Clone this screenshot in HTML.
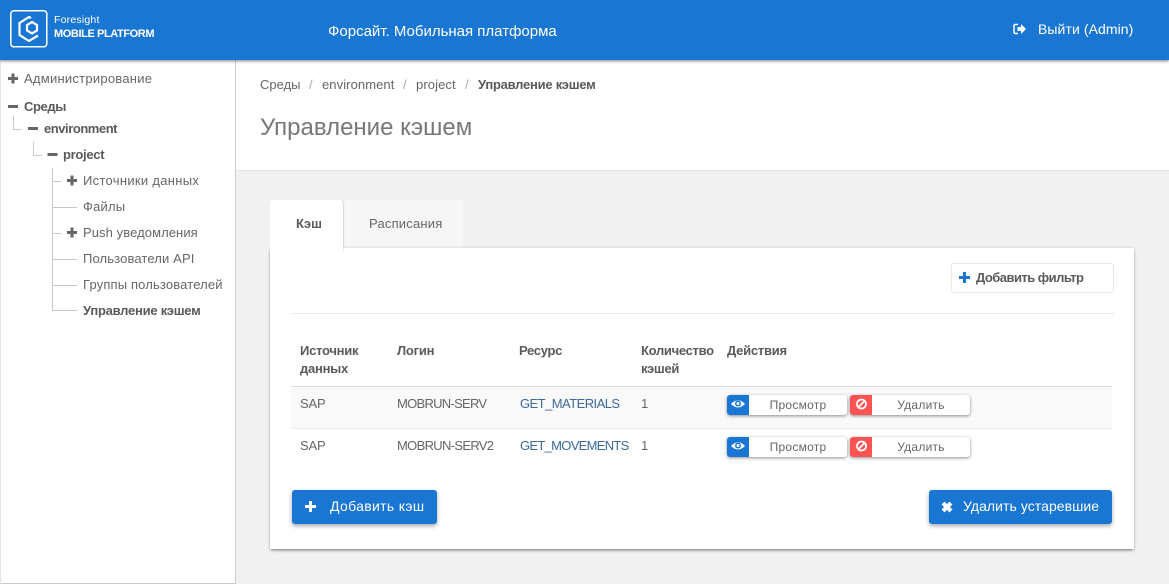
<!DOCTYPE html>
<html><head><meta charset="utf-8">
<style>
html,body{margin:0;padding:0;width:1169px;height:584px;overflow:hidden;background:#f1f1f1;font-family:"Liberation Sans",sans-serif;font-size:13px;color:#666}
.a{position:absolute;white-space:nowrap;line-height:16px}
.b{font-weight:bold;color:#5a5a5a}
.l{position:absolute;background:#c8c8c8}
.act{position:absolute;height:20px;width:120px;background:#fff;border-radius:3px;box-shadow:0 1px 3px rgba(0,0,0,.45);font-size:12px;line-height:21px;color:#666;text-align:center;letter-spacing:.25px}
.act i{position:absolute;left:0;top:0;width:22px;height:20px;border-radius:3px 0 0 3px;display:block}
.act svg{position:absolute;left:0;top:0}
.act span{position:absolute;left:22px;right:0;top:0;text-align:center}
.btn{position:absolute;height:34px;background:#1976d2;border-radius:3px;box-shadow:0 2px 4px rgba(0,0,0,.35);color:#fff;font-size:14px;line-height:33px}
</style></head>
<body>
<div style="position:absolute;left:0;top:0;width:1169px;height:60px;background:#1976d2;box-shadow:0 1px 3px rgba(0,0,0,.5);z-index:5">
<svg style="position:absolute;left:0;top:0" width="170" height="60" fill="none" stroke="#fff">
<rect x="10.800" y="10.800" width="36" height="36" rx="3" stroke-width="1.500"/>
<path d="M31 18L29 17L19.500 23V35L29 41L38 35.500" stroke-width="2.200"/>
<path d="M32 22L37 25V30.500L32 33.500L27 30.500V25Z" stroke-width="2.200"/>
</svg>
<div class="a" style="left:54px;top:12px;font-size:10.500px;color:#fff;letter-spacing:.2px">Foresight</div>
<div class="a" style="left:54px;top:26px;font-size:11px;font-weight:bold;color:#fff;letter-spacing:-.4px">MOBILE PLATFORM</div>
<div class="a" style="left:328px;top:22px;line-height:20px;font-size:15px;color:#fff">Форсайт. Мобильная платформа</div>
<svg style="position:absolute;left:1013px;top:23px" width="14" height="13"><path d="M5 1.500H2.500Q1 1.500 1 3V9Q1 10.500 2.500 10.500H5" fill="none" stroke="#fff" stroke-width="1.500"/><path d="M4.500 4H8V1L13 6L8 11V8H4.500Z" fill="#fff"/></svg>
<div class="a" style="left:1038px;top:21px;font-size:14px;color:#fff;letter-spacing:.08px">Выйти (Admin)</div>
</div>

<!-- sidebar -->
<div style="position:absolute;left:0;top:60px;width:235px;height:524px;background:#fff;border-right:1px solid #ccc"></div>
<div style="position:absolute;left:0;top:583px;width:235px;height:1px;background:#ccc"></div>
<div style="position:absolute;left:0;top:60px;width:1px;height:524px;background:#e4e4e4"></div>
<svg style="position:absolute;left:0;top:60px" width="235" height="270" fill="#666">
<path d="M8 17h3.500v-3.500h3v3.500h3.500v3h-3.500v3.500h-3v-3.500h-3.500z"/>
<rect x="8" y="45" width="10" height="3"/>
<rect x="28" y="67" width="10" height="3"/>
<rect x="47.500" y="93" width="10" height="3"/>
<path d="M67 119h3.500v-3.500h3v3.500h3.500v3h-3.500v3.500h-3v-3.500h-3.500z"/>
<path d="M67 171h3.500v-3.500h3v3.500h3.500v3h-3.500v3.500h-3v-3.500h-3.500z"/>
</svg>
<div class="l" style="left:13px;top:116px;width:1px;height:13px"></div><div class="l" style="left:13px;top:129px;width:9px;height:1px"></div>
<div class="l" style="left:33px;top:142px;width:1px;height:13px"></div><div class="l" style="left:33px;top:155px;width:9px;height:1px"></div>
<div class="l" style="left:52px;top:168px;width:1px;height:143px"></div>
<div class="l" style="left:52px;top:181px;width:9px;height:1px"></div>
<div class="l" style="left:52px;top:207px;width:25px;height:1px"></div>
<div class="l" style="left:52px;top:233px;width:9px;height:1px"></div>
<div class="l" style="left:52px;top:259px;width:25px;height:1px"></div>
<div class="l" style="left:52px;top:285px;width:25px;height:1px"></div>
<div class="l" style="left:52px;top:310px;width:25px;height:1px"></div>
<div class="a" style="left:24px;top:71px;letter-spacing:.25px">Администрирование</div>
<div class="a b" style="left:24px;top:99px;letter-spacing:-.4px">Среды</div>
<div class="a b" style="left:44px;top:121px;letter-spacing:-.45px">environment</div>
<div class="a b" style="left:63px;top:147px;letter-spacing:-.3px">project</div>
<div class="a" style="left:83px;top:173px;letter-spacing:.3px">Источники данных</div>
<div class="a" style="left:83px;top:199px;letter-spacing:.2px">Файлы</div>
<div class="a" style="left:83px;top:225px;letter-spacing:.08px">Push уведомления</div>
<div class="a" style="left:83px;top:251px;letter-spacing:.13px">Пользователи API</div>
<div class="a" style="left:83px;top:277px;letter-spacing:.15px">Группы пользователей</div>
<div class="a b" style="left:83px;top:303px;letter-spacing:-.25px">Управление кэшем</div>

<!-- page header -->
<div style="position:absolute;left:236px;top:60px;width:933px;height:110px;background:#fff;border-bottom:1px solid #e4e4e4"></div>
<div class="a" style="left:260px;top:77px">Среды</div>
<div class="a" style="left:309px;top:77px;color:#aaa">/</div>
<div class="a" style="left:322px;top:77px;letter-spacing:.08px">environment</div>
<div class="a" style="left:403px;top:77px;color:#aaa">/</div>
<div class="a" style="left:416px;top:77px;letter-spacing:.1px">project</div>
<div class="a" style="left:465px;top:77px;color:#aaa">/</div>
<div class="a b" style="left:478px;top:77px;letter-spacing:-.25px">Управление кэшем</div>
<div class="a" style="left:260px;top:114px;font-size:24px;line-height:28px;color:#777">Управление кэшем</div>

<!-- tabs -->
<div style="position:absolute;left:344px;top:200px;width:119px;height:48px;background:#f6f6f6;border-radius:3px 3px 0 0"></div>
<div style="position:absolute;left:270px;top:248px;width:864px;height:301px;background:#fff;box-shadow:0 2px 3px -1px rgba(0,0,0,.5),0 0 3px rgba(0,0,0,.14)"></div>
<div style="position:absolute;left:270px;top:200px;width:73px;height:52px;background:#fff;border-radius:3px 3px 0 0;box-shadow:1px 0 1px rgba(0,0,0,.1)"></div>
<div class="a b" style="left:296px;top:216px">Кэш</div>
<div class="a" style="left:369px;top:216px;letter-spacing:.2px">Расписания</div>

<!-- filter -->
<div style="position:absolute;left:951px;top:263px;width:161px;height:28px;border:1px solid #e8e8e8;border-radius:3px;background:#fff"></div>
<svg style="position:absolute;left:959px;top:272px" width="11" height="11"><path d="M0 4h4V0h3v4h4v3H7v4H4V7H0z" fill="#1976d2"/></svg>
<div class="a b" style="left:976px;top:270px;letter-spacing:-.53px">Добавить фильтр</div>
<div style="position:absolute;left:291px;top:313px;width:823px;height:1px;background:#eaeaea"></div>

<!-- table -->
<div class="a b" style="left:300px;top:342px;line-height:18px;letter-spacing:-.25px">Источник<br>данных</div>
<div class="a b" style="left:397px;top:342px;line-height:18px;letter-spacing:-.2px">Логин</div>
<div class="a b" style="left:519px;top:342px;line-height:18px;letter-spacing:-.3px">Ресурс</div>
<div class="a b" style="left:641px;top:342px;line-height:18px;letter-spacing:-.3px">Количество<br>кэшей</div>
<div class="a b" style="left:727px;top:342px;line-height:18px;letter-spacing:-.25px">Действия</div>
<div style="position:absolute;left:291px;top:386px;width:821px;height:43px;background:#f9f9f9;border-top:1px solid #ddd;border-bottom:1px solid #ececec;box-sizing:border-box"></div>

<div class="a" style="left:300px;top:396px;letter-spacing:-.2px">SAP</div>
<div class="a" style="left:397px;top:396px;letter-spacing:-.72px">MOBRUN-SERV</div>
<div class="a" style="left:520px;top:396px;color:#3a6a9e;letter-spacing:-.55px">GET_MATERIALS</div>
<div class="a" style="left:641px;top:396px">1</div>
<div class="a" style="left:300px;top:438px;letter-spacing:-.2px">SAP</div>
<div class="a" style="left:397px;top:438px;letter-spacing:-.68px">MOBRUN-SERV2</div>
<div class="a" style="left:520px;top:438px;color:#3a6a9e;letter-spacing:-.7px">GET_MOVEMENTS</div>
<div class="a" style="left:641px;top:438px">1</div>

<div class="act" style="left:727px;top:395px"><i style="background:#1976d2"></i><svg width="22" height="20"><path d="M4 9Q11 1.500 18 9Q11 16 4 9Z" fill="#fff"/><circle cx="11" cy="8.500" r="3" fill="#1976d2"/><circle cx="11" cy="8.500" r="1.500" fill="#fff"/></svg><span>Просмотр</span></div>
<div class="act" style="left:850px;top:395px"><i style="background:#ff5252"></i><svg width="22" height="20"><circle cx="11.500" cy="9" r="4.500" fill="none" stroke="#fff" stroke-width="1.800"/><path d="M8.500 12L14.500 6" stroke="#fff" stroke-width="1.800"/></svg><span>Удалить</span></div>
<div class="act" style="left:727px;top:437px"><i style="background:#1976d2"></i><svg width="22" height="20"><path d="M4 9Q11 1.500 18 9Q11 16 4 9Z" fill="#fff"/><circle cx="11" cy="8.500" r="3" fill="#1976d2"/><circle cx="11" cy="8.500" r="1.500" fill="#fff"/></svg><span>Просмотр</span></div>
<div class="act" style="left:850px;top:437px"><i style="background:#ff5252"></i><svg width="22" height="20"><circle cx="11.500" cy="9" r="4.500" fill="none" stroke="#fff" stroke-width="1.800"/><path d="M8.500 12L14.500 6" stroke="#fff" stroke-width="1.800"/></svg><span>Удалить</span></div>

<!-- bottom buttons -->
<div class="btn" style="left:292px;top:490px;width:145px"><svg style="position:absolute;left:13px;top:11px" width="11" height="11"><path d="M0 4h4V0h3v4h4v3H7v4H4V7H0z" fill="#fff"/></svg><span style="position:absolute;left:38px;letter-spacing:.33px">Добавить кэш</span></div>
<div class="btn" style="left:929px;top:490px;width:183px"><svg style="position:absolute;left:12px;top:11px" width="12" height="12"><path d="M1 3.500L3.500 1L6 3.500L8.500 1L11 3.500L8.500 6L11 8.500L8.500 11L6 8.500L3.500 11L1 8.500L3.500 6Z" fill="#fff" stroke="#fff" stroke-width=".6"/></svg><span style="position:absolute;left:34px;letter-spacing:.06px">Удалить устаревшие</span></div>
</body></html>
